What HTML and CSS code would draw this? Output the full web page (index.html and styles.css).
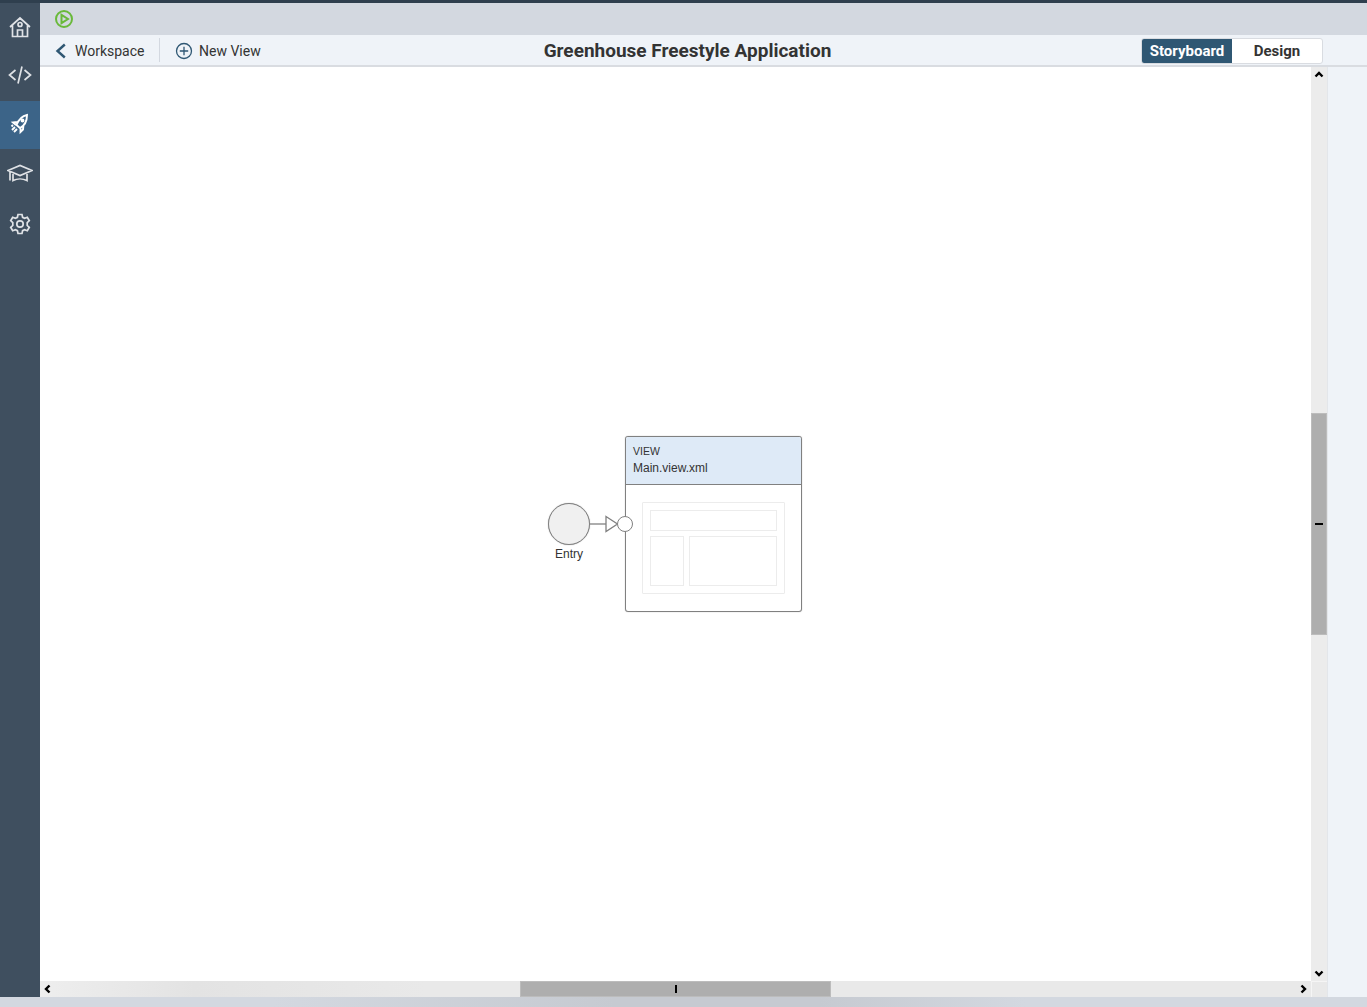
FILE: index.html
```html
<!DOCTYPE html>
<html lang="en">
<head>
    <meta charset="UTF-8">
    <title>Greenhouse Freestyle Application</title>
    <link rel="stylesheet" href="styles.css">
</head>
<body>
    <div class="topline"></div>
    <div class="middle">
        <nav class="sidebar">
            <a class="side-item">
                <svg width="24" height="24" viewBox="0 0 24 24" class="side-icon"><path d="M2 12 12 3l10 9M4.500 10.500V21.500h15V10.500M9.500 21.500v-6.500h5v6.500M10 9.500a2 2 0 1 0 4 0a2 2 0 1 0-4 0"/></svg>
            </a>
            <a class="side-item">
                <svg width="24" height="24" viewBox="0 0 24 24" class="side-icon"><path d="M7.500 7 1.500 12l6 5M16.500 7l6 5-6 5M14 3.500 10 20.500"/></svg>
            </a>
            <a class="side-item active">
                <svg width="24" height="24" viewBox="0 2 24 24" class="rocket-icon"><path d="M19 4C14 5 10.500 9 8.500 14l3.500 3C16 15 19 10 19 4ZM9.500 11 5 11.500 8 14M12.500 16.500V21l2.500-2.500.5-4.500M5 14l-1.500 1.500M7 16l-3 3M9 18l-3 3"/><circle cx="14.500" cy="9.500" r="1"/></svg>
            </a>
            <a class="side-item">
                <svg width="26" height="24" viewBox="0 -1 26 24" class="side-icon"><path d="M1 8.500 13 3.500l12 5-12 5ZM6 10.700V18.500c4-2 10-2 14 0v-7.800M3 9.500v9"/></svg>
            </a>
            <a class="side-item gear">
                <svg width="24" height="24" viewBox="0 0 24 24" class="side-icon"><path d="M10 2.500h4l.6 2.800 2 1 2.700-1 2 3.400-2.100 1.900v2.800l2.100 1.900-2 3.400-2.700-1-2 1-.6 2.800h-4l-.6-2.800-2-1-2.700 1-2-3.400 2.100-1.900v-2.800L2.700 8.700l2-3.400 2.700 1 2-1Z"/><circle cx="12" cy="12" r="3.200"/></svg>
            </a>
        </nav>

        <div class="main">
            <div class="runbar">
                <svg width="20" height="20" viewBox="0 0 20 20" class="run-icon"><circle cx="10" cy="10" r="8"/><path d="M7.500 5.800 14 10l-6.500 4.200Z"/></svg>
            </div>

            <div class="toolbar">
                <div class="tool-left">
                    <a class="tool-btn back">
                        <svg width="12" height="18" viewBox="0 0 12 18" class="tool-icon"><path d="M9.800 2.500 2.500 9l7.300 6.500"/></svg>
                        <span>Workspace</span>
                    </a>
                    <a class="tool-btn new-view">
                        <svg width="18" height="18" viewBox="0 0 18 18" class="plus-icon"><circle cx="9" cy="9" r="7.500"/><path d="M9 4.800v8.400M4.800 9h8.400"/></svg>
                        <span>New View</span>
                    </a>
                </div>
                <h1 class="title">Greenhouse Freestyle Application</h1>
                <div class="switch">
                    <button class="switch-btn on">Storyboard</button>
                    <button class="switch-btn">Design</button>
                </div>
            </div>

            <div class="work">
                <div class="editor">
                    <div class="editor-top">
                        <div class="canvas">
                            <div class="diagram">
                                <div class="entry">
                                    <div class="entry-circle"></div>
                                    <div class="entry-label">Entry</div>
                                </div>
                                <svg class="link" width="30" height="20" viewBox="0 0 30 20"><path d="M0 10H16"/><path d="M16 2.500 27.500 10 16 17.500Z"/></svg>
                                <div class="view-card">
                                    <div class="view-head">
                                        <div class="view-type">VIEW</div>
                                        <div class="view-name">Main.view.xml</div>
                                    </div>
                                    <div class="view-body">
                                        <div class="wire-top"></div>
                                        <div class="wire-row">
                                            <div class="wire-side"></div>
                                            <div class="wire-content"></div>
                                        </div>
                                    </div>
                                    <div class="port"></div>
                                </div>
                            </div>
                        </div>
                        <div class="vscroll">
                            <svg width="16" height="16" viewBox="0 0 16 16" class="arrow"><path d="M4.500 9.500 8 6l3.500 3.500"/></svg>
                            <div class="vthumb"><span class="vgrip"></span></div>
                            <svg width="16" height="16" viewBox="0 0 16 16" class="arrow arrow-down"><path d="M4.500 6.500 8 10l3.500-3.500"/></svg>
                        </div>
                    </div>
                    <div class="hscroll">
                        <svg width="16" height="16" viewBox="0 0 16 16" class="arrow"><path d="M9.500 4.500 6 8l3.500 3.500"/></svg>
                        <div class="hthumb"><span class="hgrip"></span></div>
                        <svg width="16" height="16" viewBox="0 0 16 16" class="arrow arrow-right"><path d="M6.500 4.500 10 8l-3.500 3.500"/></svg>
                        <div class="corner"></div>
                    </div>
                </div>
                <div class="right-strip"></div>
            </div>
        </div>
    </div>
    <div class="bottom-strip"></div>
</body>
</html>
```

FILE: styles.css
```css
* { box-sizing: border-box; }

html, body {
    margin: 0;
    height: 1007px;
    overflow: hidden;
}

body {
    display: flex;
    flex-direction: column;
    font-family: Roboto, Arial, sans-serif;
    background-color: #eff3f8;
    color: #333;
}

.topline { height: 3px; background-color: #2f3f4e; }

.middle { display: flex; height: 994px; }

/* left nav */
.sidebar {
    width: 40px;
    flex-shrink: 0;
    background-color: #3f4f5f;
}

.side-item {
    display: flex;
    align-items: center;
    justify-content: center;
    height: 48px;
}

.side-item.active { background-color: #3c6488; margin-top: 2px; }
.side-item.gear { margin-top: 3px; }

.side-icon {
    fill: none;
    stroke: #dfe2e6;
    stroke-width: 1.7;
}

.rocket-icon {
    fill: none;
    stroke: #fff;
    stroke-width: 1.9;
}

/* main area */
.main {
    flex: 1;
    display: flex;
    flex-direction: column;
    min-width: 0;
}

.runbar {
    height: 32px;
    display: flex;
    align-items: center;
    padding-left: 14px;
    background-color: #d3d8e0;
}

.run-icon {
    fill: none;
    stroke: #69b93a;
    stroke-width: 2;
}

.toolbar {
    height: 32px;
    display: grid;
    grid-template-columns: 1fr auto 1fr;
    align-items: center;
    padding-right: 32px;
    background-color: #eff3f8;
    border-bottom: 2px solid #d9dce1;
}

.tool-left { display: flex; align-items: center; }

.tool-btn {
    display: flex;
    align-items: center;
    padding-top: 1px;
    font-size: 14px;
    color: #333;
}

.back {
    width: 120px;
    height: 24px;
    padding-left: 15px;
    gap: 8px;
    border-right: 1px solid #d3d8e0;
}

.new-view { padding-left: 15px; gap: 6px; }

.tool-icon {
    fill: none;
    stroke: #2f5773;
    stroke-width: 2.4;
}

.plus-icon {
    fill: none;
    stroke: #2f5773;
    stroke-width: 1.3;
}

.title {
    margin: 1px 0 0;
    font-size: 19px;
    font-weight: 700;
    color: #333;
}

.switch {
    justify-self: end;
    margin: 1px 12px 0 0;
    display: flex;
    height: 26px;
    border: 1px solid #d9dce1;
    border-radius: 3px;
    background-color: #fff;
}

.switch-btn {
    border: none;
    padding: 0;
    font-family: inherit;
    font-size: 15px;
    font-weight: 700;
    color: #333;
    background: none;
    width: 90px;
}

.switch-btn.on {
    color: #fff;
    background-color: #2f5773;
    border-radius: 2px 0 0 2px;
}

.work { flex: 1; display: flex; min-height: 0; }

.editor {
    flex: 1;
    display: flex;
    flex-direction: column;
    min-width: 0;
}

.editor-top { flex: 1; display: flex; min-height: 0; }

/* storyboard */
.canvas {
    flex: 1;
    display: flex;
    align-items: center;
    justify-content: center;
    background-color: #fff;
}

.diagram { display: flex; align-items: center; margin-right: 1px; }

.entry {
    position: relative;
    width: 42px;
    height: 42px;
}

.entry-circle {
    width: 42px;
    height: 42px;
    border: 1px solid #808080;
    border-radius: 50%;
    background-color: #f0f0f0;
    box-shadow: 0 0 1px #999;
}

.entry-label {
    position: absolute;
    top: 43px;
    left: -10px;
    right: -10px;
    text-align: center;
    font-family: "Liberation Sans", Arial, sans-serif;
    font-size: 12px;
    line-height: 16px;
}

.link {
    margin-right: 5px;
    fill: none;
    stroke: #808080;
    stroke-width: 1.3;
}

.view-card {
    position: relative;
    width: 177px;
    height: 176px;
    border: 1px solid #808080;
    border-radius: 3px;
    background-color: #fff;
    box-shadow: 0 0 1px #999;
}

.view-head {
    height: 48px;
    padding: 7px 7px 0;
    background-color: #deeaf7;
    border-bottom: 1px solid #808080;
    font-family: "Liberation Sans", Arial, sans-serif;
    color: #333;
    border-radius: 2px 2px 0 0;
}

.view-type { font-size: 10.5px; line-height: 14px; }
.view-name { font-size: 12px; line-height: 16px; margin-top: 2px; }

.view-body {
    margin: 17px 16px 0;
    height: 92px;
    padding: 7px;
    display: flex;
    flex-direction: column;
    gap: 5px;
    border: 1px solid #ececec;
    border-radius: 1px;
}

.wire-top { height: 21px; border: 1px solid #ececec; }
.wire-row { flex: 1; display: flex; gap: 5px; }
.wire-side { width: 34px; border: 1px solid #ececec; }
.wire-content { flex: 1; border: 1px solid #ececec; }

.port {
    position: absolute;
    left: -9px;
    top: 79px;
    width: 16px;
    height: 16px;
    border: 1px solid #808080;
    border-radius: 50%;
    background-color: #fff;
}

/* scrollbars */
.vscroll {
    width: 16px;
    display: flex;
    flex-direction: column;
    align-items: center;
    background-color: #ececec;
}

.arrow {
    flex-shrink: 0;
    fill: none;
    stroke: #000;
    stroke-width: 2.4;
}

.vthumb {
    width: 16px;
    height: 222px;
    margin-top: 330px;
    display: flex;
    align-items: center;
    justify-content: center;
    background-color: #aeaeae;
    border: 1px solid #bcbcbc;
}

.vgrip { width: 8px; height: 2px; background-color: #000; }
.arrow-down { margin-top: auto; }

.hscroll {
    height: 16px;
    display: flex;
    align-items: center;
    background: linear-gradient(90deg, #eeeeee 0%, #e3e3e3 12%, #e9e9e9 30%, #e9e9e9 100%);
}

.hthumb {
    width: 311px;
    height: 16px;
    margin-left: 464px;
    display: flex;
    align-items: center;
    justify-content: center;
    background-color: #aeaeae;
    border: 1px solid #bcbcbc;
}

.hgrip { width: 2px; height: 8px; background-color: #000; }
.arrow-right { margin-left: auto; }

.corner { width: 16px; height: 16px; border-left: 1px solid #f5f5f5; border-top: 1px solid #f5f5f5; }

.right-strip {
    width: 40px;
    flex-shrink: 0;
    background-color: #eff3f8;
    border-left: 1px solid #e3e6ea;
}

.bottom-strip {
    height: 10px;
    background: linear-gradient(90deg, #d3d8e0 0%, #d3d8e0 20%, #c6cad1 45%, #c6cad1 60%, #d3d8e0 75%);
}
```
